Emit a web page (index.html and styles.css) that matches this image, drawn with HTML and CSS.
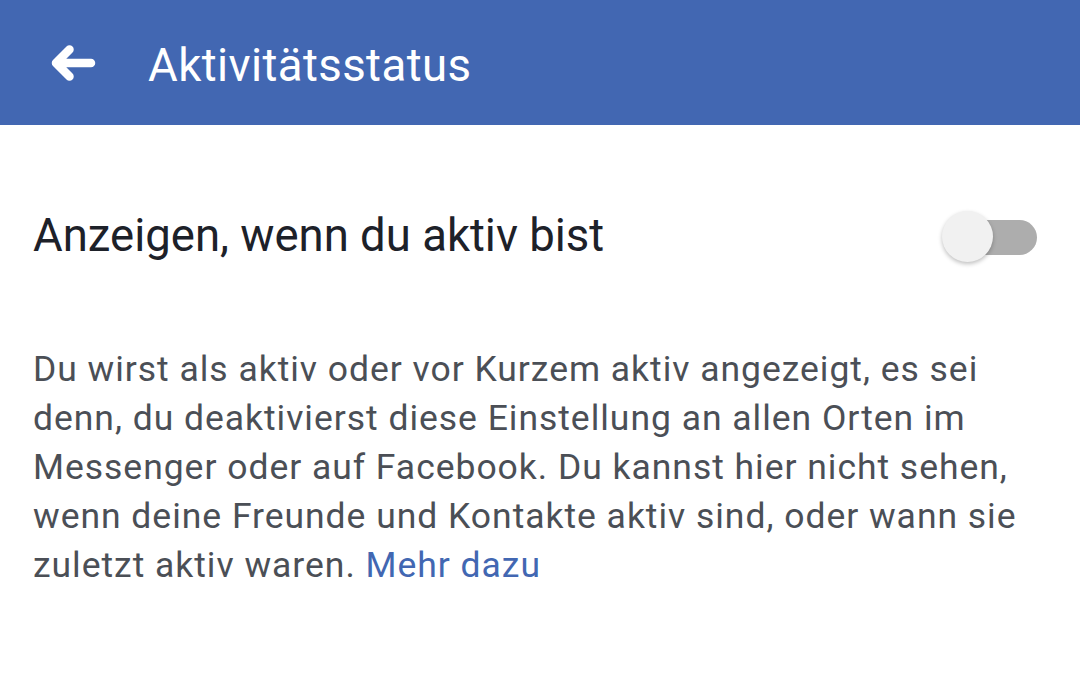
FILE: index.html
```html
<!DOCTYPE html>
<html lang="de">
<head>
<meta charset="utf-8">
<link rel="stylesheet" href="styles.css">
</head>
<body>
<header class="topbar">
  <svg class="back" width="48" height="40" viewBox="0 0 48 40">
    <path d="M8 20 H43 M8 20 L21.5 6.5 M8 20 L21.5 33.5" fill="none" stroke="#fff" stroke-width="8.5" stroke-linecap="round" stroke-linejoin="round"/>
  </svg>
  <h1 class="title">Aktivitätsstatus</h1>
</header>
<main class="content">
  <div class="row">
    <span class="row-label">Anzeigen, wenn du aktiv bist</span>
    <div class="switch"><div class="track"></div><div class="thumb"></div></div>
  </div>
  <p class="desc">Du wirst als aktiv oder vor Kurzem aktiv angezeigt, es sei denn, du deaktivierst diese Einstellung an allen Orten im Messenger oder auf Facebook. Du kannst hier nicht sehen, wenn deine Freunde und Kontakte aktiv sind, oder wann sie zuletzt aktiv waren. <a class="link" href="#">Mehr dazu</a></p>
</main>
</body>
</html>
```
FILE: styles.css
```css
html, body {
  margin: 0;
  padding: 0;
  background: #fff;
  font-family: Roboto, "Noto Sans", sans-serif;
}
.topbar {
  height: 125px;
  background: #4267b2;
  display: flex;
  align-items: center;
  padding-left: 48px;
  box-sizing: border-box;
}
.back {
  display: block;
}
.title {
  margin: 5px 0 0 52px;
  color: #fff;
  font-weight: 400;
  font-size: 45.6px;
  letter-spacing: 0.4px;
}
.content {
  padding: 0 42px 0 33px;
}
.row {
  display: flex;
  align-items: center;
  justify-content: space-between;
  height: 220px;
}
.row-label {
  font-size: 45.5px;
  color: #1d2129;
}
.switch {
  position: relative;
  width: 95px;
  height: 52px;
  margin-top: 4px;
  margin-right: 1px;
}
.track {
  position: absolute;
  right: 0;
  top: 9px;
  width: 86px;
  height: 35px;
  border-radius: 18px;
  background: #adadad;
}
.thumb {
  position: absolute;
  left: 0;
  top: 0;
  width: 51px;
  height: 51px;
  border-radius: 50%;
  background: #f1f1f1;
  box-shadow: 0 2px 4px rgba(0,0,0,0.25);
}
.desc {
  margin: 0;
  font-size: 35.5px;
  letter-spacing: 0.97px;
  line-height: 49px;
  color: #4b4f56;
}
.link {
  color: #4267b2;
  text-decoration: none;
}
```
